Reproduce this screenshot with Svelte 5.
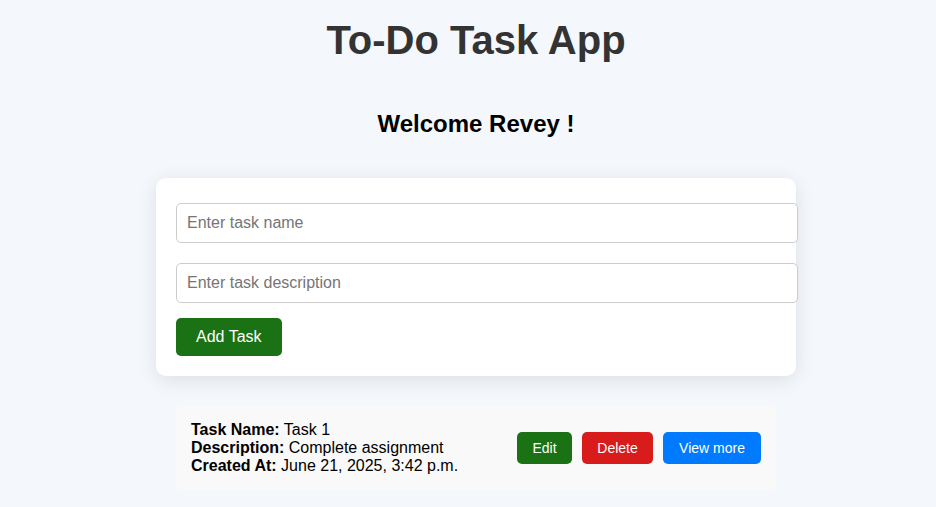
<script>
  let name = $state('');
  let description = $state('');
  let tasks = $state([
    { name: 'Task 1', description: 'Complete assignment', created: 'June 21, 2025, 3:42 p.m.' }
  ]);

  function addTask(event) {
    event.preventDefault();
    if (!name.trim()) return;
    tasks.push({ name, description, created: new Date().toLocaleString() });
    name = '';
    description = '';
  }

  function removeTask(index) {
    tasks.splice(index, 1);
  }
</script>

<main>
  <h1>To-Do Task App</h1>
  <h2>Welcome Revey !</h2>

  <form onsubmit={addTask}>
    <input type="text" aria-label="Task name" placeholder="Enter task name" bind:value={name} />
    <input type="text" aria-label="Task description" placeholder="Enter task description" bind:value={description} />
    <button class="add" type="submit">Add Task</button>
  </form>

  <ul>
    {#each tasks as task, index}
      <li>
        <div class="details">
          <div><strong>Task Name:</strong> {task.name}</div>
          <div><strong>Description:</strong> {task.description}</div>
          <div><strong>Created At:</strong> {task.created}</div>
        </div>
        <div class="actions">
          <button class="edit" type="button">Edit</button>
          <button class="delete" type="button" onclick={() => removeTask(index)}>Delete</button>
          <button class="view" type="button">View more</button>
        </div>
      </li>
    {/each}
  </ul>
</main>

<style>
  :global(body) {
    background: #f4f7fc;
  }

  main {
    display: flex;
    flex-direction: column;
    align-items: center;
    padding: 18px 0 16px 16px;
    font-family: Arial, "Liberation Sans", sans-serif;
    font-size: 16px;
    line-height: 18px;
    color: #000;
  }

  h1 {
    margin: 0;
    font-size: 40px;
    line-height: 44px;
    color: #333;
  }

  h2 {
    margin: 48px 0 40px;
    font-size: 24px;
    line-height: 28px;
  }

  form {
    display: flex;
    flex-direction: column;
    align-items: flex-start;
    box-sizing: border-box;
    width: 100%;
    max-width: 640px;
    padding: 20px;
    border-radius: 10px;
    background: #fff;
    box-shadow: 0 4px 20px rgba(0, 0, 0, 0.1);
  }

  input {
    width: 100%;
    height: 18px;
    margin: 5px 0 15px;
    padding: 10px;
    border: 1px solid #ccc;
    border-radius: 5px;
    background: #fff;
    font: inherit;
  }

  input::placeholder {
    color: #757575;
  }

  button {
    border: none;
    border-radius: 5px;
    color: #fff;
    font-family: inherit;
    cursor: pointer;
  }

  .add {
    padding: 10px 20px;
    background: #1b7215;
    font-size: 16px;
    line-height: 18px;
  }

  ul {
    width: 100%;
    max-width: 600px;
    margin: 30px 0 0;
    padding: 0;
    list-style: none;
  }

  li {
    display: flex;
    align-items: center;
    justify-content: space-between;
    margin-bottom: 10px;
    padding: 15px;
    border-radius: 5px;
    background: #f9f9f9;
  }

  .actions {
    display: flex;
    gap: 10px;
  }

  .actions button {
    padding: 8px 14px;
    font-size: 14px;
    line-height: 16px;
  }

  .actions .edit {
    min-width: 55px;
    background: #1b7215;
  }

  .actions .delete {
    min-width: 71px;
    background: #d81b1b;
  }

  .actions .view {
    min-width: 98px;
    background: #007bff;
  }
</style>
